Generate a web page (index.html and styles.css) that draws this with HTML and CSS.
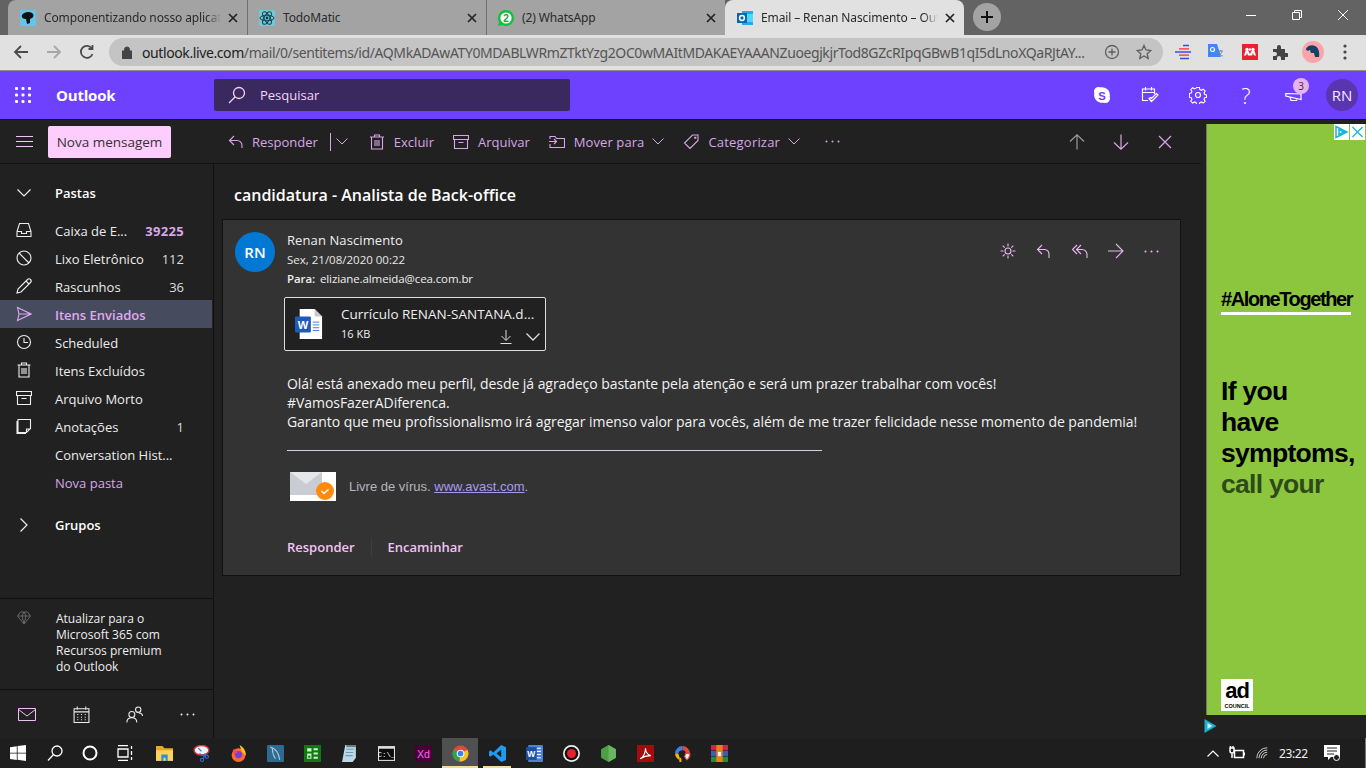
FILE: index.html
```html
<!DOCTYPE html>
<html lang="pt-BR">
<head>
<meta charset="utf-8">
<title>Email – Renan Nascimento – Outlook</title>
<link rel="stylesheet" href="styles.css">
</head>
<body>
<header class="tabstrip">
  <div class="tab">
    <svg class="fav" viewBox="0 0 16 16"><rect width="16" height="16" fill="#61c6e8"/><path d="M2 5c2-3 7-4 10-2 2 1 2 4 0 5l-2 1v4l-3 1-1-5C4 9 1 8 2 5z" fill="#111"/></svg>
    <span class="tab-title">Componentizando nosso aplicati</span>
    <svg class="tab-x" viewBox="0 0 10 10"><path d="M1 1l8 8M9 1l-8 8"/></svg>
  </div>
  <div class="tab tab-sep">
    <svg class="fav" viewBox="0 0 16 16"><rect width="16" height="16" fill="#6fc9d6"/><g fill="none" stroke="#14404e"><ellipse cx="8" cy="8" rx="7" ry="2.8"/><ellipse cx="8" cy="8" rx="7" ry="2.8" transform="rotate(60 8 8)"/><ellipse cx="8" cy="8" rx="7" ry="2.8" transform="rotate(120 8 8)"/></g><circle cx="8" cy="8" r="1.4" fill="#14404e"/></svg>
    <span class="tab-title tab-plain">TodoMatic</span>
    <svg class="tab-x" viewBox="0 0 10 10"><path d="M1 1l8 8M9 1l-8 8"/></svg>
  </div>
  <div class="tab tab-sep">
    <svg class="fav" viewBox="0 0 16 16"><path d="M8 0a8 8 0 0 1 0 16c-1.500 0-2.800-.4-4-1l-4 1 1-4A8 8 0 0 1 8 0z" fill="#12c13c"/><circle cx="8" cy="8" r="5.600" fill="#fff"/><text x="8" y="11.500" class="fav-num">2</text></svg>
    <span class="tab-title tab-plain">(2) WhatsApp</span>
    <svg class="tab-x" viewBox="0 0 10 10"><path d="M1 1l8 8M9 1l-8 8"/></svg>
  </div>
  <div class="tab tab-active">
    <svg class="fav" viewBox="0 0 16 16"><rect x="5" y="1" width="11" height="14" fill="#28a8ea"/><rect x="10" y="4" width="6" height="8" fill="#50d9ff"/><rect y="3" width="10" height="10" fill="#0a64b8"/><circle cx="5" cy="8" r="2.400" fill="none" stroke="#fff" stroke-width="1.500"/></svg>
    <span class="tab-title">Email – Renan Nascimento – Outl</span>
    <svg class="tab-x" viewBox="0 0 10 10"><path d="M1 1l8 8M9 1l-8 8"/></svg>
  </div>
  <div class="newtab"><svg viewBox="0 0 12 12"><path d="M6 0v12M0 6h12"/></svg></div>
  <div class="winctl">
    <svg viewBox="0 0 12 12"><path d="M1 6.500h10"/></svg>
    <svg viewBox="0 0 12 12"><path d="M1.500 3.500h7v7h-7zM3.500 3.500v-2h7v7h-2"/></svg>
    <svg viewBox="0 0 12 12"><path d="M1 1l10 10M11 1L1 11"/></svg>
  </div>
</header>

<div class="addressbar">
  <svg class="nav-ic" viewBox="0 0 16 16"><path d="M15 8H2M8 2L2 8l6 6"/></svg>
  <svg class="nav-ic nav-off" viewBox="0 0 16 16"><path d="M1 8h13M8 2l6 6-6 6"/></svg>
  <svg class="nav-ic" viewBox="0 0 16 16"><path d="M13.500 10a6 6 0 1 1-.6-5.500M13.500 1v4h-4"/></svg>
  <div class="omnibox">
    <svg class="lock" viewBox="0 0 10 13"><path d="M0 5h10v8H0zM2.500 5V3.500a2.500 2.500 0 0 1 5 0V5" /></svg>
    <span class="url"><b>outlook.live.com</b>/mail/0/sentitems/id/AQMkADAwATY0MDABLWRmZTktYzg2OC0wMAItMDAKAEYAAANZuoegjkjrTod8GZcRIpqGBwB1qI5dLnoXQaRJtAY...</span>
    <svg class="omni-ic" viewBox="0 0 16 16"><circle cx="8" cy="8" r="6.500"/><path d="M8 4.500v7M4.500 8h7"/></svg>
    <svg class="omni-ic" viewBox="0 0 16 16"><path d="M8 1.500l2 4.500 4.800.5-3.600 3.200 1 4.800L8 12l-4.200 2.500 1-4.800L1.200 6.500 6 6z"/></svg>
  </div>
  <div class="exts">
    <svg class="ext-1" viewBox="0 0 16 16"><path d="M8 1.500h6M5 14.500h9M0 8h16" stroke="#3550e8" stroke-width="1.600"/><path d="M4 4.800h10M4 11.200h10" stroke="#ff5a5f" stroke-width="1.800"/></svg>
    <svg class="ext-2" viewBox="0 0 16 16"><path d="M0 0h9l1 3h6v13H7l-1-3H0z" fill="#dde2ea"/><path d="M0 0h9l4 13H0z" fill="#4285f4"/><path d="M10 7h5M12.500 6v1M11 7c0 3 2 5 4 5M14 7c-.5 2-2 4-4 5" stroke="#7b8696" fill="none"/><circle cx="4.500" cy="5.500" r="2" fill="none" stroke="#fff" stroke-width="1.200"/></svg>
    <svg class="ext-3" viewBox="0 0 16 16"><rect width="16" height="16" fill="#e9202f"/><g fill="#fff"><circle cx="5" cy="5.500" r="1.700"/><circle cx="11" cy="5.500" r="1.700"/><circle cx="8" cy="5.500" r="1.200"/><path d="M2 11.500L3.500 7h3L8 10l1.500-3h3l1.500 4.500h-2L11 9l-1 2.500H6L5 9l-1 2.500z"/></g></svg>
    <svg class="ext-4" viewBox="0 0 16 16"><path class="puzzle" d="M1 5h4V3a2 2 0 0 1 4 0v2h4v4h2a2 2 0 0 1 0 4h-2v3H9v-2a2 2 0 0 0-4 0v2H1v-4h2a2 2 0 0 0 0-4H1z"/></svg>
    <svg class="ext-av" viewBox="0 0 22 22"><circle cx="11" cy="11" r="11" fill="#fba5a8"/><path d="M4 8c1-3 6-5 9-3 3 1 5 6 4 11h-4l-1-4H9L8 9C6 10 4 10 4 8z" fill="#17406b"/></svg>
    <svg class="ext-dots" viewBox="0 0 4 16"><circle cx="2" cy="2" r="1.600"/><circle cx="2" cy="8" r="1.600"/><circle cx="2" cy="14" r="1.600"/></svg>
  </div>
</div>

<div class="suitebar">
  <svg class="waffle" viewBox="0 0 16 16"><g fill="#fff"><rect width="3" height="3" rx="1"/><rect x="6.500" width="3" height="3" rx="1"/><rect x="13" width="3" height="3" rx="1"/><rect y="6.500" width="3" height="3" rx="1"/><rect x="6.500" y="6.500" width="3" height="3" rx="1"/><rect x="13" y="6.500" width="3" height="3" rx="1"/><rect y="13" width="3" height="3" rx="1"/><rect x="6.500" y="13" width="3" height="3" rx="1"/><rect x="13" y="13" width="3" height="3" rx="1"/></g></svg>
  <span class="brand">Outlook</span>
  <div class="search">
    <svg class="search-ic" viewBox="0 0 18 18"><circle cx="11" cy="7" r="5.500"/><path d="M7 11l-6 6"/></svg>
    <span>Pesquisar</span>
  </div>
  <div class="suite-icons">
    <svg class="s-ic" viewBox="0 0 16 16"><path class="skype" d="M8 1a7 7 0 0 1 6.800 8.600A4 4 0 0 1 9.600 14.800 7 7 0 0 1 1.200 6.400 4 4 0 0 1 6.400 1.200 7 7 0 0 1 8 1z"/><text x="8" y="12" class="skype-s">S</text></svg>
    <svg class="s-ic s-line" viewBox="0 0 18 18"><path d="M7 14.500H1.500V3h12v5M1.500 6.500h12M4.500 1v3.500M10.500 1v3.500M8 12.500l2.500 3 6.500-6.500-1.500-1.500-5 5-1-1z"/></svg>
    <svg class="s-ic s-line" viewBox="0 0 18 18"><circle cx="9" cy="9" r="2.500"/><path d="M7.500 1h3l.5 2.200 1.700.8 2-1.200 2 2-1.200 2 .8 1.700 2 .5v2.500l-2 .5-.8 1.700 1.200 2-2 2-2-1.200-1.700.8-.5 2h-3l-.5-2-1.700-.8-2 1.200-2-2 1.200-2-.8-1.700-2-.5V7.500l2-.5.8-1.700-1.200-2 2-2 2 1.200 1.700-.8z" transform="translate(.6 .6) scale(.93)"/></svg>
    <span class="s-help">?</span>
    <span class="s-mega">
      <svg class="s-ic s-line" viewBox="0 0 18 18"><path d="M.8 7.500L16 8v5.500L.8 10zM5 11l1 3.500h5.500l.5-2"/></svg>
      <span class="badge">3</span>
    </span>
    <span class="me">RN</span>
  </div>
</div>

<div class="workspace">
  <div class="left">
    <div class="commandbar">
      <div class="cmd-nav">
        <svg class="hamb" viewBox="0 0 17 11"><path d="M0 .5h17M0 5.500h17M0 10.500h17"/></svg>
        <button class="compose">Nova mensagem</button>
      </div>
      <div class="cmds">
        <svg class="c-ic c-re" viewBox="0 0 16 16"><path d="M6 2L1.500 6.500 6 11M2 6.500h7a5 5 0 0 1 5 5V14"/></svg>
        <span class="cmd cmd-reply">Responder</span>
        <i class="cmd-div"></i>
        <svg class="chev" viewBox="0 0 12 7"><path d="M.5.500L6 6 11.500.500"/></svg>
        <svg class="c-ic c-ex" viewBox="0 0 16 16"><path d="M1 3h14M5.500 3V1h5v2M2.500 3v12h11V3M6 6v6M8 6v6M10 6v6"/></svg>
        <span class="cmd">Excluir</span>
        <svg class="c-ic c-ar" viewBox="0 0 16 16"><path d="M.5 1.500h15v4H.5zM1.500 5.500v9h13v-9M5.500 8.500h5"/></svg>
        <span class="cmd">Arquivar</span>
        <svg class="c-ic c-mo" viewBox="0 0 16 16"><path d="M1 5V2.500h5l1.500 2H15.500v9H1V10M0 7.500h7M5 5l2.500 2.500L5 10"/></svg>
        <span class="cmd cmd-mo">Mover para</span>
        <svg class="chev chev-m" viewBox="0 0 12 7"><path d="M.5.500L6 6 11.500.500"/></svg>
        <svg class="c-ic c-ca" viewBox="0 0 16 16"><path d="M9.500 1H15v5.500L7 14.500 1.500 9zM11.800 3.200h1v1h-1z"/></svg>
        <span class="cmd cmd-ca">Categorizar</span>
        <svg class="chev chev-m" viewBox="0 0 12 7"><path d="M.5.500L6 6 11.500.500"/></svg>
        <svg class="dots dots-cmd" viewBox="0 0 15 3"><circle cx="1.500" cy="1.500" r="1"/><circle cx="7.500" cy="1.500" r="1"/><circle cx="13.500" cy="1.500" r="1"/></svg>
        <span class="spacer"></span>
        <svg class="arrow arrow-off" viewBox="0 0 16 16"><path d="M8 15.500V1M1 7.500L8 .8l7 6.700"/></svg>
        <svg class="arrow" viewBox="0 0 16 16"><path d="M8 .5V15M1 8.500l7 6.700 7-6.700"/></svg>
        <svg class="arrow" viewBox="0 0 16 16"><path d="M2 2l12 12M14 2L2 14"/></svg>
      </div>
    </div>

    <div class="below">
      <nav class="sidebar">
        <div class="folders">
          <div class="group-head"><svg class="tw" viewBox="0 0 14 8"><path d="M.5.500L7 7 13.500.500"/></svg><b>Pastas</b></div>
          <div class="row"><svg class="f-ic" viewBox="0 0 16 16"><path d="M3.500 1.500h9l2.500 8v5H1v-5zM1 9.500h4.500v2h5v-2H15"/></svg><span class="f-name">Caixa de E...</span><b class="count-hi">39225</b></div>
          <div class="row"><svg class="f-ic" viewBox="0 0 16 16"><circle cx="8" cy="8" r="7"/><path d="M3 3l10 10"/></svg><span class="f-name">Lixo Eletrônico</span><span class="count">112</span></div>
          <div class="row"><svg class="f-ic" viewBox="0 0 16 16"><path d="M1 15l1-4L11.500 1.500a2 2 0 0 1 3 3L5 14zM10 3l3 3"/></svg><span class="f-name">Rascunhos</span><span class="count">36</span></div>
          <div class="row row-sel"><svg class="f-ic" viewBox="0 0 16 16"><path d="M1.500 1.500L15 8 1.500 14.500 3 8zM3 8h12"/></svg><b class="f-name">Itens Enviados</b></div>
          <div class="row"><svg class="f-ic" viewBox="0 0 16 16"><circle cx="8" cy="8" r="6.500"/><path d="M8 4v4.500h4"/></svg><span class="f-name">Scheduled</span></div>
          <div class="row"><svg class="f-ic" viewBox="0 0 16 16"><path d="M1.500 3h13M5.500 3V1h5v2M3 3v12h10V3M6 6v6M8 6v6M10 6v6"/></svg><span class="f-name">Itens Excluídos</span></div>
          <div class="row"><svg class="f-ic" viewBox="0 0 16 16"><path d="M.5 1.500h15v4H.5zM1.500 5.500v9h13v-9M5.500 8.500h5"/></svg><span class="f-name">Arquivo Morto</span></div>
          <div class="row"><svg class="f-ic" viewBox="0 0 16 16"><path d="M2 1.500h12.500v9l-4 4H2zM14 11h-3.500v3.500M1 3v12.500h9"/></svg><span class="f-name">Anotações</span><span class="count">1</span></div>
          <div class="row"><span class="f-name">Conversation Hist...</span></div>
          <div class="row"><span class="f-name f-new">Nova pasta</span></div>
          <div class="group-head group-2"><svg class="tw tw-r" viewBox="0 0 8 14"><path d="M.5.500L7 7 .5 13.500"/></svg><b>Grupos</b></div>
        </div>
        <div class="upgrade">
          <svg class="gem" viewBox="0 0 14 14"><path d="M3.500 1h7L13.500 5 7 13 .5 5zM.5 5h13M5 5l2 8 2-8-2-4z"/></svg>
          <p>Atualizar para o Microsoft 365 com Recursos premium do Outlook</p>
        </div>
        <div class="modules">
          <svg class="m-mail" viewBox="0 0 18 13"><path d="M.5.500h17v12H.5zM.5 1.500L9 8l8.500-6.500"/></svg>
          <svg viewBox="0 0 16 16"><path d="M1 2.500h14V15.500H1zM1 5.500h14M4 .5v3M12 .5v3M4 8h1M7.500 8h1M11 8h1M4 10.500h1M7.500 10.500h1M11 10.500h1M4 13h1M7.500 13h1M11 13h1"/></svg>
          <svg viewBox="0 0 16 16"><circle cx="5.500" cy="8" r="2.800"/><circle cx="11.500" cy="3.500" r="2.500"/><path d="M.8 15.500c0-2.500 1.500-4.500 4.700-4.500s4.700 2 4.700 4.500M12 6.500c2 0 3.500 1 3.500 3"/></svg>
          <svg class="dots" viewBox="0 0 15 3"><circle cx="1.500" cy="1.500" r="1"/><circle cx="7.500" cy="1.500" r="1"/><circle cx="13.500" cy="1.500" r="1"/></svg>
        </div>
      </nav>

      <main class="reading">
        <h1 class="subject">candidatura - Analista de Back-office</h1>
        <article class="message">
          <div class="msg-head">
            <span class="avatar">RN</span>
            <div class="meta">
              <div class="sender">Renan Nascimento</div>
              <div class="date">Sex, 21/08/2020 00:22</div>
              <div class="to"><b>Para:</b> eliziane.almeida@cea.com.br</div>
            </div>
            <div class="msg-actions">
              <svg viewBox="0 0 16 16"><circle cx="8" cy="8" r="3"/><path d="M8 .5v3M8 12.500v3M.5 8h3M12.500 8h3M2.700 2.700l2 2M11.300 11.300l2 2M13.300 2.700l-2 2M4.700 11.300l-2 2"/></svg>
              <svg viewBox="0 0 16 16"><path d="M6 2L1.500 6.500 6 11M2 6.500h7a5 5 0 0 1 4 5V15"/></svg>
              <svg viewBox="0 0 16 16"><path d="M5 2L.5 6.500 5 11M9 2L4.500 6.500 9 11M5 6.500h5a5 5 0 0 1 5 5V15"/></svg>
              <svg viewBox="0 0 16 16"><path d="M0 8h15M8 1l7 7-7 7"/></svg>
              <svg class="dots dots-msg" viewBox="0 0 15 3"><circle cx="1.500" cy="1.500" r="1"/><circle cx="7.500" cy="1.500" r="1"/><circle cx="13.500" cy="1.500" r="1"/></svg>
            </div>
          </div>
          <div class="attachment">
            <svg class="doc" viewBox="0 0 30 32"><path d="M5 0h16l8 8v24H5z" fill="#fff"/><path d="M21 0l8 8h-8z" fill="#c9c9c9"/><path d="M19 14h7M19 17h7M19 20h7M19 23h7" stroke="#2e78d6"/><rect y="8" width="17" height="17" rx="1" fill="#1c5cb8"/><text x="8.500" y="21.500" class="doc-w">W</text></svg>
            <div class="att-info">
              <div class="att-name">Currículo RENAN-SANTANA.d...</div>
              <div class="att-size">16 KB</div>
            </div>
            <div class="att-actions">
              <svg viewBox="0 0 12 14"><path d="M6 0v10M1.500 6L6 10.500 10.500 6M.5 13.500h11"/></svg>
              <svg class="att-ch" viewBox="0 0 14 8"><path d="M.5.500L7 7 13.500.500"/></svg>
            </div>
          </div>
          <div class="body-text">
            <p>Olá! está anexado meu perfil, desde já agradeço bastante pela atenção e será um prazer trabalhar com vocês!</p>
            <p>#VamosFazerADiferenca.</p>
            <p>Garanto que meu profissionalismo irá agregar imenso valor para vocês, além de me trazer felicidade nesse momento de pandemia!</p>
          </div>
          <div class="rule"></div>
          <div class="avast">
            <svg class="avast-pic" viewBox="0 0 46 29"><rect width="46" height="29" fill="#fff"/><path d="M0 0h32v23H0z" fill="#c9ccd3"/><path d="M0 0l16 12L32 0z" fill="#e6e7ea"/><circle cx="35" cy="19" r="9" fill="#ff8a0c"/><path d="M31.500 19l2.500 2.500 4.500-4" fill="none" stroke="#fff" stroke-width="1.500"/></svg>
            <span class="avast-text">Livre de vírus. <a href="#">www.avast.com</a>.</span>
          </div>
          <div class="msg-foot">
            <a href="#">Responder</a><i></i><a href="#">Encaminhar</a>
          </div>
        </article>
      </main>
    </div>
  </div>

  <aside class="ad-col">
    <div class="ad">
      <div class="ad-choice">
        <svg viewBox="0 0 15 15"><path d="M2 2l11 5.500L2 13zM5 5v5l5-2.500z" fill="none" stroke="#19b7d6" stroke-width="1.500"/></svg>
        <svg viewBox="0 0 15 15"><path d="M2.500 2.500l10 10M12.500 2.500l-10 10" fill="none" stroke="#19b7d6" stroke-width="1.300"/></svg>
      </div>
      <div class="ad-tag">#AloneTogether</div>
      <div class="ad-rule"></div>
      <div class="ad-copy">If you<br>have<br>symptoms,<br><span class="ad-dim">call your</span></div>
      <div class="ad-logo"><span class="ad-ad">ad</span><span class="ad-council">COUNCIL</span></div>
    </div>
    <svg class="ad-mark" viewBox="0 0 12 14"><path d="M0 0l12 7-12 7z" fill="#19b0d3"/><path d="M3 4v6l5-3z" fill="#cdeef6"/></svg>
  </aside>
</div>

<footer class="taskbar">
  <svg class="t-win" viewBox="0 0 16 16"><path d="M0 2.200l6.800-1v6.500H0zM7.600 1l8.400-1v7.700H7.600zM0 8.500h6.800V15L0 14zM7.600 8.500H16V16l-8.400-1.200z" fill="#fff"/></svg>
  <svg class="t-sys" viewBox="0 0 16 16"><circle cx="10" cy="6" r="5"/><path d="M6.500 9.500L1 15.500"/></svg>
  <svg class="t-sys t-cort" viewBox="0 0 16 16"><circle cx="8" cy="8" r="6.500"/></svg>
  <svg class="t-sys" viewBox="0 0 16 16"><path d="M1 .5h10M1 15.500h10M1 4h10v8H1zM14.500 1v3M14.500 6v4M14.500 12v3"/></svg>
  <div class="t-apps">
    <span class="t-app"><svg viewBox="0 0 16 16"><path d="M0 1h6l2 2h8v3H0z" fill="#e8a91e"/><path d="M0 5h16v10H0z" fill="#ffd25c"/><path d="M5 9h6v6H9v-3H7v3H5z" fill="#2f8fd6"/></svg></span>
    <span class="t-app"><svg viewBox="0 0 16 16"><ellipse cx="8" cy="5" rx="7" ry="4.500" fill="#f2f2f2" stroke="#d8323c" stroke-width="1.400"/><path d="M5 3l3 3M6 8l5 3M11 8l-1 5" stroke="#2f6fd6" fill="none"/><circle cx="8.500" cy="14" r="1.500" fill="none" stroke="#2f6fd6"/><circle cx="13" cy="11" r="1.500" fill="none" stroke="#2f6fd6"/></svg></span>
    <span class="t-app"><svg viewBox="0 0 16 16"><circle cx="8" cy="9.500" r="6.500" fill="#ff6a2b"/><path d="M9 0c4 2 6 6 6 10l-4-4z" fill="#ffbe1a"/><circle cx="8" cy="9" r="3.400" fill="#7b3fd0"/><path d="M3 4c2 0 3 1 4 3L3 9z" fill="#ff3f6c"/></svg></span>
    <span class="t-app"><svg viewBox="0 0 16 16"><rect width="16" height="16" rx="1" fill="#2f6a93"/><path d="M3 2c5 1 8 6 9 12M5 3c0 4 1 7 3 10" fill="none" stroke="#a9c7da"/></svg></span>
    <span class="t-app"><svg viewBox="0 0 16 16"><rect width="16" height="16" fill="#0f7a12"/><path d="M3 3h4v3H3zM9 3h4v2H9zM9 7h4v2H9zM3 8h4v5H3zM9 11h4v2H9z" fill="#d8efd8"/><path d="M4 10h2v2H4z" fill="#0f7a12"/></svg></span>
    <span class="t-app"><svg viewBox="0 0 16 16"><path d="M4 0h10v12l-3 4H1z" fill="#bcd8e8"/><path d="M5 4h7M4.500 7h7M4 10h7" stroke="#6f9ab4"/><path d="M5 0h9v2H5z" fill="#6b7a84"/></svg></span>
    <span class="t-app"><svg viewBox="0 0 16 16"><rect width="16" height="14" y="1" fill="#dfdfdf"/><rect x="1" y="3.500" width="14" height="10.500" fill="#0b0b0b"/><text x="8" y="11.500" class="t-cmd">C:\_</text></svg></span>
    <span class="t-app"><svg viewBox="0 0 16 16"><rect width="16" height="16" rx="2" fill="#470137"/><text x="8" y="12" class="t-xd">Xd</text></svg></span>
    <span class="t-app t-active"><svg viewBox="0 0 16 16"><circle cx="8" cy="8" r="7.500" fill="#e04a3c"/><path d="M8 8L1.400 4.500A7.500 7.500 0 0 0 7 15.500z" fill="#2ea44f"/><path d="M8 8l6.500-3.500A7.500 7.500 0 0 1 7 15.500z" fill="#f7c325"/><circle cx="8" cy="8" r="3.600" fill="#fff"/><circle cx="8" cy="8" r="2.700" fill="#3b82ea"/></svg></span>
    <span class="t-app t-open"><svg viewBox="0 0 16 16"><path d="M11.500 0L16 2v12l-4.500 2L4 9l-2.500 2L0 10V6l1.500-1L4 7z" fill="#1f9cf0"/><path d="M11.500 4.500L7 8l4.500 3.500z" fill="#1d1d1d"/></svg></span>
    <span class="t-app"><svg viewBox="0 0 16 16"><rect x="2" width="14" height="16" rx="1" fill="#4a83d8"/><path d="M10 3h4M10 6h4M10 9h4M10 12h4" stroke="#fff"/><rect y="2" width="10" height="12" fill="#1d4f9e"/><text x="5" y="11" class="t-w">W</text></svg></span>
    <span class="t-app"><svg viewBox="0 0 16 16"><circle cx="8" cy="8" r="8" fill="#eee"/><circle cx="8" cy="8" r="6.400" fill="#111"/><circle cx="8" cy="8" r="4.200" fill="#e8222b"/></svg></span>
    <span class="t-app"><svg viewBox="0 0 16 16"><path d="M8 0l7 4v8l-7 4-7-4V4z" fill="#4e9e46"/><path d="M8 0l7 4v8l-7 4z" fill="#6ab55f"/></svg></span>
    <span class="t-app"><svg viewBox="0 0 16 16"><rect width="16" height="16" fill="#a10d0d"/><path d="M3 13c3-2 5-6 5-10 0 4 2 6 5 7-3 0-7 1-10 3z" fill="none" stroke="#fff"/></svg></span>
    <span class="t-app"><svg viewBox="0 0 16 16" class="t-gapp"><path d="M8 1a7 7 0 0 1 7 7l-4 0a3 3 0 0 0-3-3z" fill="#e04a3c"/><path d="M8 1a7 7 0 0 0-7 7l3 0a4 4 0 0 1 4-3z" fill="#3b82ea"/><path d="M1 8a7 7 0 0 0 4 6V11L4 8z" fill="#f5b400"/><path d="M5 11l2 2v3H5z" fill="#f5b400"/><path d="M15 8a7 7 0 0 1-3 6l-2-3 1-3z" fill="#f0f0f0" stroke="#e04a3c"/></svg></span>
    <span class="t-app"><svg viewBox="0 0 16 16"><rect width="16" height="5" fill="#c9264a"/><rect y="5.500" width="16" height="5" fill="#3f5cb4"/><rect y="11" width="16" height="5" fill="#2a8a3a"/><rect x="5" width="6" height="16" fill="#e87e22"/><rect x="6.500" y="6.500" width="3" height="4" fill="#f5f5f5"/></svg></span>
  </div>
  <div class="tray">
    <svg class="tr-up" viewBox="0 0 12 7"><path d="M.5 6.500L6 1l5.500 5.500"/></svg>
    <svg class="tr-plug" viewBox="0 0 16 14"><path d="M5.500 4.500h9v7h-9zM1 2v3a2 2 0 0 0 4 0V2zM3 7v5M1.500 0v2M4 0v2M15.500 6.500v3"/></svg>
    <svg class="tr-wifi" viewBox="0 0 16 16"><path d="M1 15A14 14 0 0 1 15 1M4 15A11 11 0 0 1 15 4M7 15a8 8 0 0 1 8-8M10 15a5 5 0 0 1 5-5"/></svg>
    <span class="clock">23:22</span>
    <svg class="tr-note" viewBox="0 0 16 16"><path d="M0 0h16v12H7l-3 3v-3H0z" fill="#fff"/><path d="M3 3h10M3 6h10M3 9h7" stroke="#222"/><circle cx="12.500" cy="12.500" r="3" fill="#1e1e1e" stroke="#fff"/></svg>
  </div>
</footer>
</body>
</html>
```

FILE: styles.css
```css
* { box-sizing: border-box; }
html, body { margin: 0; padding: 0; }
body {
  width: 1366px; height: 768px; overflow: hidden;
  display: flex; flex-direction: column;
  background: #212121; color: #fff;
  font-family: "Open Sans", "Noto Sans", sans-serif;
}
svg { display: block; flex: none; }
p { margin: 0; }

/* browser tabs */
.tabstrip { height: 35px; flex: none; display: flex; background: #636363; padding-left: 8px; }
.tab { width: 239px; height: 35px; display: flex; align-items: center; padding: 0 9px 0 12px; background: #a3a3a3; position: relative; font: 12px "Noto Sans", sans-serif; color: #2a2a2a; }
.tab:first-child { border-top-left-radius: 8px; }
.tab-sep { border-left: 1px solid #6f6f6f; padding-left: 11px; }
.tab-active { background: #e1e1e1; border-radius: 8px 8px 0 0; }
.fav { width: 16px; height: 16px; margin-right: 8px; }
.fav-num { font: bold 10px "Liberation Sans", sans-serif; text-anchor: middle; fill: #12a836; }
.tab-title { flex: 1; min-width: 0; white-space: nowrap; letter-spacing: -.12px; -webkit-mask-image: linear-gradient(90deg, #000 92%, transparent); mask-image: linear-gradient(90deg, #000 92%, transparent); }
.tab-plain { -webkit-mask-image: none; mask-image: none; }
.tab-x { width: 10px; height: 10px; margin-left: 7px; fill: none; stroke: #222; stroke-width: 1.700; }
.newtab { width: 28px; height: 28px; border-radius: 50%; background: #a3a3a3; margin: 3px 0 0 9px; display: flex; align-items: center; justify-content: center; }
.newtab svg { width: 12px; height: 12px; fill: none; stroke: #111; stroke-width: 2; }
.winctl { margin-left: auto; display: flex; align-items: flex-start; gap: 34px; padding: 9px 17px 0 0; }
.winctl svg { width: 12px; height: 12px; fill: none; stroke: #fff; stroke-width: 1; }

/* address bar */
.addressbar { height: 36px; flex: none; display: flex; align-items: center; background: #e1e1e1; border-bottom: 1px solid #8f8f8f; padding: 0 0 1px 13px; }
.nav-ic { width: 16px; height: 16px; margin-right: 17px; fill: none; stroke: #4b4b4b; stroke-width: 1.800; }
.nav-off { stroke: #a6a6a6; }
.omnibox { width: 1054px; height: 28px; margin-left: -3px; border-radius: 14px; background: #c4c4c4; display: flex; align-items: center; padding-left: 13px; color: #555; }
.lock { width: 10px; height: 13px; fill: #444; stroke: #444; fill-rule: evenodd; }
.url { width: 952px; margin-left: 10px; white-space: nowrap; font: 14px "Noto Sans", sans-serif; letter-spacing: -.4px; }
.url b { font-weight: 400; color: #222; }
.omni-ic { width: 16px; height: 16px; fill: none; stroke: #5f5f5f; stroke-width: 1.300; margin-left: 10px; }
.omni-ic + .omni-ic { margin-left: 16px; }
.exts { display: flex; align-items: center; margin-left: 12px; }
.exts svg { width: 16px; height: 16px; }
.ext-1 { margin-right: 17px; }
.ext-2 { margin-right: 18px; }
.ext-3 { margin-right: 14px; }
.ext-4 { margin-right: 14px; }
.puzzle { fill: #444; }
.exts .ext-av { width: 22px; height: 22px; margin-right: 19px; }
.exts .ext-dots { width: 4px; fill: #444; }

/* Outlook suite bar */
.suitebar { height: 49px; flex: none; display: flex; align-items: center; background: #6e40ff; border-bottom: 1px solid #111; padding-left: 15px; }
.waffle { width: 16px; height: 16px; }
.brand { font: 700 15px "Open Sans", sans-serif; margin-left: 25px; width: 158px; letter-spacing: -.2px; }
.search { width: 356px; height: 32px; background: #39295f; border-radius: 2px; display: flex; align-items: center; padding-left: 14px; color: #f5d5f8; font-size: 13px; }
.search-ic { width: 18px; height: 18px; fill: none; stroke: #f5d5f8; stroke-width: 1.300; margin-right: 14px; }
.suite-icons { margin-left: auto; display: flex; align-items: center; padding-right: 8px; }
.s-ic { width: 18px; height: 18px; }
.suite-icons > .s-ic { margin-right: 30px; }
.s-line { fill: none; stroke: #fff; stroke-width: 1.200; }
.skype { fill: #fff; }
.skype-s { font: bold 10px "Liberation Sans", sans-serif; text-anchor: middle; fill: #6e40ff; }
.s-help { width: 18px; margin-right: 30px; font: 300 22px "Open Sans", sans-serif; text-align: center; line-height: 24px; }
.s-mega { position: relative; width: 18px; margin-right: 23px; }
.badge { position: absolute; left: 8px; top: -8px; width: 16px; height: 16px; border-radius: 50%; background: #e6b3f0; color: #333; font-size: 10px; text-align: center; line-height: 16px; }
.me { width: 32px; height: 32px; border-radius: 50%; background: #5a35b0; text-align: center; line-height: 32px; font-size: 15px; color: #f3e8ff; }

/* workspace */
.workspace { height: 618px; flex: none; display: flex; overflow: hidden; }
.left { width: 1201px; flex: none; display: flex; flex-direction: column; }
.commandbar { height: 44px; flex: none; display: flex; border-bottom: 1px solid #111; }
.cmd-nav { width: 214px; flex: none; display: flex; align-items: center; padding-left: 16px; }
.hamb { width: 17px; height: 11px; fill: none; stroke: #f0c8f5; margin-right: 15px; }
.compose { width: 123px; height: 32px; padding: 0; border: 0; border-radius: 2px; background: #fdcdfd; color: #333; font: 13.500px "Open Sans", sans-serif; }
.cmds { flex: 1; display: flex; align-items: center; color: #d7a6e6; font-size: 13px; padding: 0 28px 0 14px; }
.c-ic { width: 16px; height: 16px; margin-right: 9px; fill: none; stroke: #d7a6e6; stroke-width: 1.100; }
.c-re { margin-right: 8px; }
.cmd { white-space: nowrap; }
.cmd-mo { letter-spacing: .1px; }
.cmd-ca { letter-spacing: .2px; }
.cmd-div { width: 1px; height: 18px; background: #d7a6e6; margin: 0 5px 0 12px; }
.chev { width: 12px; height: 7px; fill: none; stroke: #d7a6e6; }
.c-ex { margin-left: 21px; }
.c-ar { margin-left: 19px; }
.c-mo { margin-left: 19px; }
.c-ca { margin-left: 19px; }
.chev-m { margin-left: 8px; }
.dots { width: 15px; height: 3px; fill: currentColor; }
.dots-cmd { margin-left: 25px; color: #d7a6e6; }
.spacer { flex: 1; }
.arrow { width: 16px; height: 16px; margin-left: 28px; fill: none; stroke: #d7a6e6; stroke-width: 1.200; }
.arrow-off { stroke: #9a9a9a; }

.below { flex: 1; min-height: 0; display: flex; }
.sidebar { width: 214px; flex: none; display: flex; flex-direction: column; border-right: 1px solid #111; font-size: 13px; }
.folders { height: 434px; flex: none; padding-top: 15px; }
.group-head { height: 28px; display: flex; align-items: center; font-size: 13px; padding-left: 17px; }
.group-head b { margin-left: 24px; font-weight: 600; }
.group-2 { margin-top: 15px; }
.tw { width: 14px; height: 8px; fill: none; stroke: #eee; stroke-width: 1.200; }
.tw-r { width: 8px; height: 14px; margin: 0 6px 0 3px; }
.group-head .tw-r + b { margin-left: 21px; }
.row { height: 28px; display: flex; align-items: center; padding: 2px 29px 0 55px; position: relative; color: #ececec; white-space: nowrap; }
.group-head + .row { margin-top: 9px; }
.row-sel { background: #474b5e; color: #e0a8f0; margin-right: 1px; }
.row-sel b { font-weight: 600; }
.f-ic { position: absolute; left: 16px; top: 6px; width: 16px; height: 16px; fill: none; stroke: #eee; stroke-width: 1.100; }
.row-sel .f-ic { stroke: #e0a8f0; }
.f-name { flex: 1; }
.f-new { color: #d8a6ea; }
.count { color: #ddd; }
.count-hi { color: #d8a6ea; font-weight: 700; letter-spacing: .3px; }
.upgrade { height: 92px; flex: none; border-top: 1px solid #111; border-bottom: 1px solid #111; display: flex; padding: 12px 6px 0 17px; font-size: 12px; line-height: 16px; color: #eee; }
.gem { width: 14px; height: 14px; fill: none; stroke: #666; margin-right: 25px; }
.upgrade p { width: 112px; }
.modules { flex: 1; display: flex; align-items: center; gap: 36.500px; padding-left: 18px; }
.modules svg { width: 17px; height: 17px; fill: none; stroke: #eee; }
.modules .m-mail { width: 18px; stroke: #f0c0f5; height: 13px; }
.modules .dots { width: 15px; height: 3px; fill: #eee; stroke: none; }

.reading { flex: 1; padding: 18px 20px 0 8px; min-width: 0; }
.subject { margin: 0 0 11px 12px; font: 600 16px/26px "Open Sans", sans-serif; }
.message { width: 959px; height: 357px; background: #333; border: 1px solid #111; padding: 12px 0 0 12px; font-size: 13px; }
.msg-head { display: flex; align-items: flex-start; height: 65px; }
.avatar { width: 40px; height: 40px; flex: none; border-radius: 50%; background: #0078d4; text-align: center; font: 600 15px/40px "Open Sans", sans-serif; }
.meta { margin: -1px 0 0 12px; }
.sender { font-size: 13px; line-height: 19px; color: #eee; letter-spacing: .1px; }
.date { font-size: 11.500px; line-height: 19px; color: #e8e8e8; }
.to { font-size: 11.500px; line-height: 19px; color: #eee; letter-spacing: -.1px; }
.to b { font-weight: 600; margin-right: 2px; }
.msg-actions { margin-left: auto; display: flex; align-items: center; gap: 20px; padding: 11px 21px 0 0; color: #e8b8f0; }
.msg-actions svg { width: 16px; height: 16px; fill: none; stroke: #e8b8f0; stroke-width: 1.100; }
.msg-actions .dots-msg { width: 15px; height: 3px; stroke: none; fill: #e8b8f0; }
.attachment { width: 262px; height: 54px; margin-left: 49px; border: 1px solid #ddd; border-radius: 2px; background: #212121; display: flex; padding: 11px 0 0 10px; position: relative; }
.doc { width: 28px; height: 30px; }
.doc-w { font: 700 12px "Liberation Sans", sans-serif; fill: #fff; text-anchor: middle; }
.att-info { margin: -4px 0 0 18px; }
.att-name { font-size: 13.500px; line-height: 18px; white-space: nowrap; color: #eee; }
.att-size { font-size: 11px; line-height: 15px; margin-top: 3px; color: #eee; }
.att-actions { position: absolute; right: 5px; bottom: 6px; display: flex; align-items: center; gap: 14px; }
.att-actions svg { width: 12px; height: 14px; fill: none; stroke: #ddd; }
.att-actions .att-ch { width: 14px; height: 8px; stroke-width: 1.300; }
.body-text { margin: 23px 0 0 52px; font-size: 14px; line-height: 19px; color: #f2f2f2; white-space: nowrap; letter-spacing: -.055px; }
.rule { width: 535px; height: 1px; background: #d5d0dd; margin: 19px 0 0 52px; }
.avast { display: flex; align-items: center; margin: 20px 0 0 55px; height: 30px; }
.avast-pic { width: 46px; height: 29px; margin-right: 13px; }
.avast-text { font: 13px "Liberation Sans", sans-serif; color: #b5b5bd; }
.avast-text a { color: #a79bf0; }
.msg-foot { display: flex; align-items: center; margin: 37px 0 0 52px; height: 18px; font-weight: 600; font-size: 13px; }
.msg-foot a { color: #f3c3f5; text-decoration: none; }
.msg-foot i { width: 1px; height: 18px; background: #3e3e3e; margin: 0 16px; }

/* ad */
.ad-col { flex: 1; padding: 4px 0 0 5px; position: relative; }
.ad { height: 591px; background: #8cc63f; border-left: 1px solid #6f7a63; position: relative; padding: 163px 0 0 14px; color: #000; font-family: "Liberation Sans", sans-serif; font-weight: 700; }
.ad-choice { position: absolute; top: 0; right: 1px; display: flex; gap: 1px; }
.ad-choice svg { width: 15px; height: 16px; background: #fff; }
.ad-tag { font-size: 20px; line-height: 24px; letter-spacing: -1.400px; white-space: nowrap; }
.ad-rule { width: 130px; height: 3px; background: #fff; margin-top: 1px; }
.ad-copy { font-size: 26.500px; line-height: 31px; letter-spacing: -.7px; margin-top: 61px; }
.ad-dim { color: #2e4a18; }
.ad-logo { position: absolute; left: 14px; bottom: 4px; width: 32px; height: 32px; background: #fff; color: #000; display: flex; flex-direction: column; align-items: center; }
.ad-ad { font-size: 22px; line-height: 24px; letter-spacing: -1px; }
.ad-council { font-size: 5.500px; line-height: 7px; }
.ad-mark { position: absolute; left: 3px; top: 599px; width: 13px; height: 14px; }

/* taskbar */
.taskbar { height: 30px; flex: none; display: flex; align-items: center; background: #1e1e1e; padding-left: 10px; }
.t-win { width: 16px; height: 16px; margin-right: 21px; }
.t-sys { width: 16px; height: 16px; margin-right: 19px; fill: none; stroke: #fff; stroke-width: 1.300; }
.t-cort { stroke-width: 2; }
.t-apps { display: flex; margin-left: -6px; }
.t-app { width: 37px; height: 30px; display: flex; align-items: center; justify-content: center; position: relative; }
.t-app svg { width: 17px; height: 17px; }
.t-active { background: #505050; width: 36px; margin-right: 1px; }
.t-active::after, .t-open::after { content: ""; position: absolute; bottom: 0; height: 2px; background: #f6dc9c; }
.t-active::after { left: 0; right: 0; }
.t-open::after { left: 4px; right: 5px; }
.t-cmd { font: 7px "Liberation Mono", monospace; fill: #fff; text-anchor: middle; }
.t-xd { font: 10px "Liberation Sans", sans-serif; fill: #ff61f6; text-anchor: middle; }
.t-w { font: bold 8px "Liberation Sans", sans-serif; fill: #fff; text-anchor: middle; }
.tray { margin-left: auto; height: 30px; display: flex; align-items: center; padding-right: 25px; border-right: 1px solid #777; }
.tray svg { fill: none; stroke: #fff; }
.tr-up { width: 12px; height: 7px; margin-right: 10px; stroke-width: 1.200; }
.tr-plug { width: 16px; height: 14px; margin-right: 11px; stroke-width: 1.500; }
.tr-wifi { width: 12px; height: 14px; margin-right: 11px; }
.clock { font: 12px "Noto Sans", sans-serif; color: #f0f0f0; width: 32px; margin-right: 13px; letter-spacing: -.4px; }
.tray .tr-note { width: 16px; height: 16px; stroke: none; }
```
